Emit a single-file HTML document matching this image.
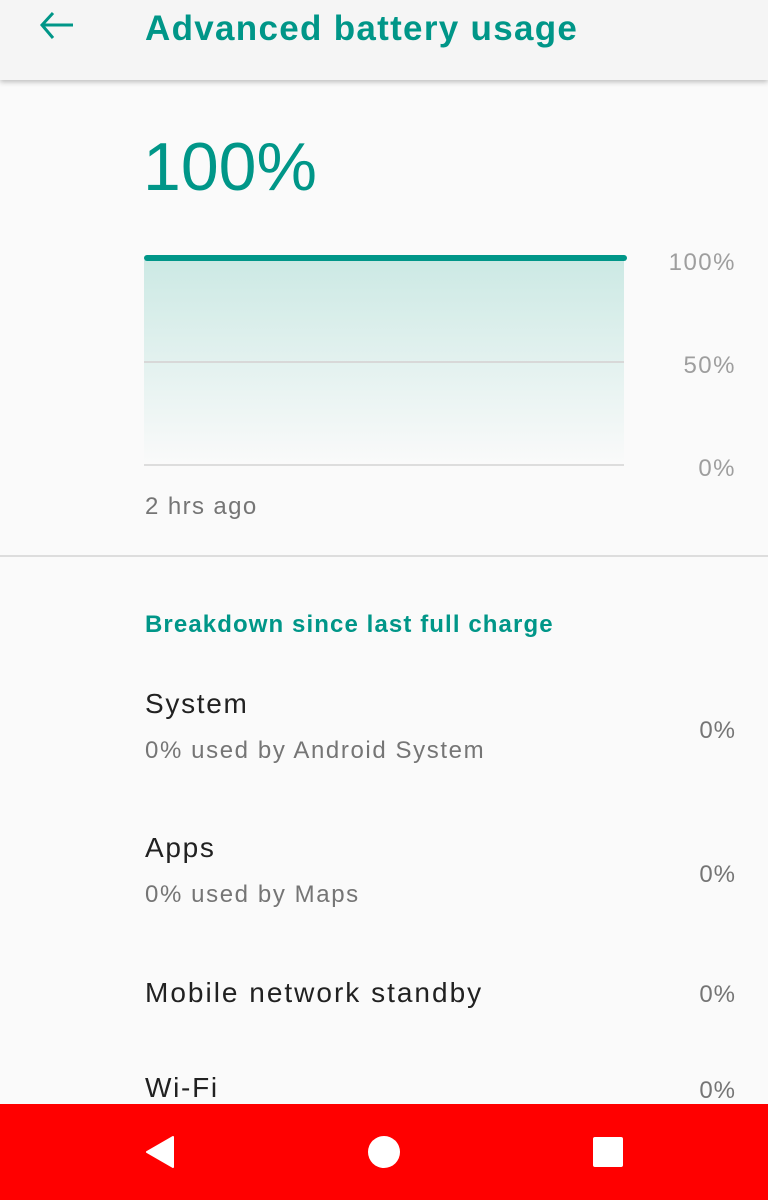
<!DOCTYPE html><html><head><style>
body{margin:0;width:768px;height:1200px;background:#fafafa;font-family:"Liberation Sans",sans-serif;position:relative;overflow:hidden}
.a{position:absolute;white-space:nowrap;line-height:1}
.hdr{position:absolute;left:0;top:0;width:768px;height:80px;background:#f5f5f5;box-shadow:0 2px 5px rgba(0,0,0,.25)}
.t{color:#212121;font-size:28px;letter-spacing:1.7px}.s{color:#757575;font-size:24px;letter-spacing:1.6px}.p{color:#757575;font-size:24px;right:32px;letter-spacing:1px}
.g{color:#9e9e9e;font-size:24px;right:32px;letter-spacing:1.5px}
</style></head><body>
<div class="hdr"></div>
<svg class="a" style="left:38px;top:10px" width="40" height="40" viewBox="0 0 40 40"><path d="M35 15H5M15 3L4 15L15 28" fill="none" stroke="#009688" stroke-width="3"/></svg>
<div class="a" style="left:145px;top:11px;font-size:35px;font-weight:bold;color:#009688;letter-spacing:1.3px">Advanced battery usage</div>
<div class="a" style="left:143px;top:133px;font-size:68px;color:#009688">100%</div>
<div class="a" style="left:144px;top:260px;width:480px;height:205px;background:linear-gradient(#cce9e4,#fafafa)"></div>
<div class="a" style="left:144px;top:255px;width:483px;height:6px;background:#009688;border-radius:3px"></div>
<div class="a" style="left:144px;top:361px;width:480px;height:2px;background:#d8d8d8"></div>
<div class="a" style="left:144px;top:464px;width:480px;height:2px;background:#ddd"></div>
<div class="a g" style="top:251px">100%</div>
<div class="a g" style="top:354px">50%</div>
<div class="a g" style="top:457px">0%</div>
<div class="a s" style="left:145px;top:495px;letter-spacing:1.4px">2 hrs ago</div>
<div class="a" style="left:0;top:555px;width:768px;height:2px;background:#ddd"></div>
<div class="a" style="left:145px;top:613px;font-size:24px;font-weight:bold;color:#009688;letter-spacing:1.1px">Breakdown since last full charge</div>
<div class="a t" style="left:145px;top:690px">System</div>
<div class="a s" style="left:145px;top:739px">0% used by Android System</div>
<div class="a p" style="top:719px">0%</div>
<div class="a t" style="left:145px;top:834px">Apps</div>
<div class="a s" style="left:145px;top:883px">0% used by Maps</div>
<div class="a p" style="top:863px">0%</div>
<div class="a t" style="left:145px;top:979px;letter-spacing:2px">Mobile network standby</div>
<div class="a p" style="top:983px">0%</div>
<div class="a t" style="left:145px;top:1074px">Wi-Fi</div>
<div class="a p" style="top:1079px">0%</div>
<div class="a" style="left:0;top:1104px;width:768px;height:96px;background:#f00"></div>
<svg class="a" style="left:0;top:1104px" width="768" height="96"><path d="M173 33L173 63L147 48Z" fill="#fff" stroke="#fff" stroke-width="2" stroke-linejoin="round"/><circle cx="384" cy="48" r="16" fill="#fff"/><rect x="593" y="33" width="30" height="30" rx="2" fill="#fff"/></svg>
</body></html>
